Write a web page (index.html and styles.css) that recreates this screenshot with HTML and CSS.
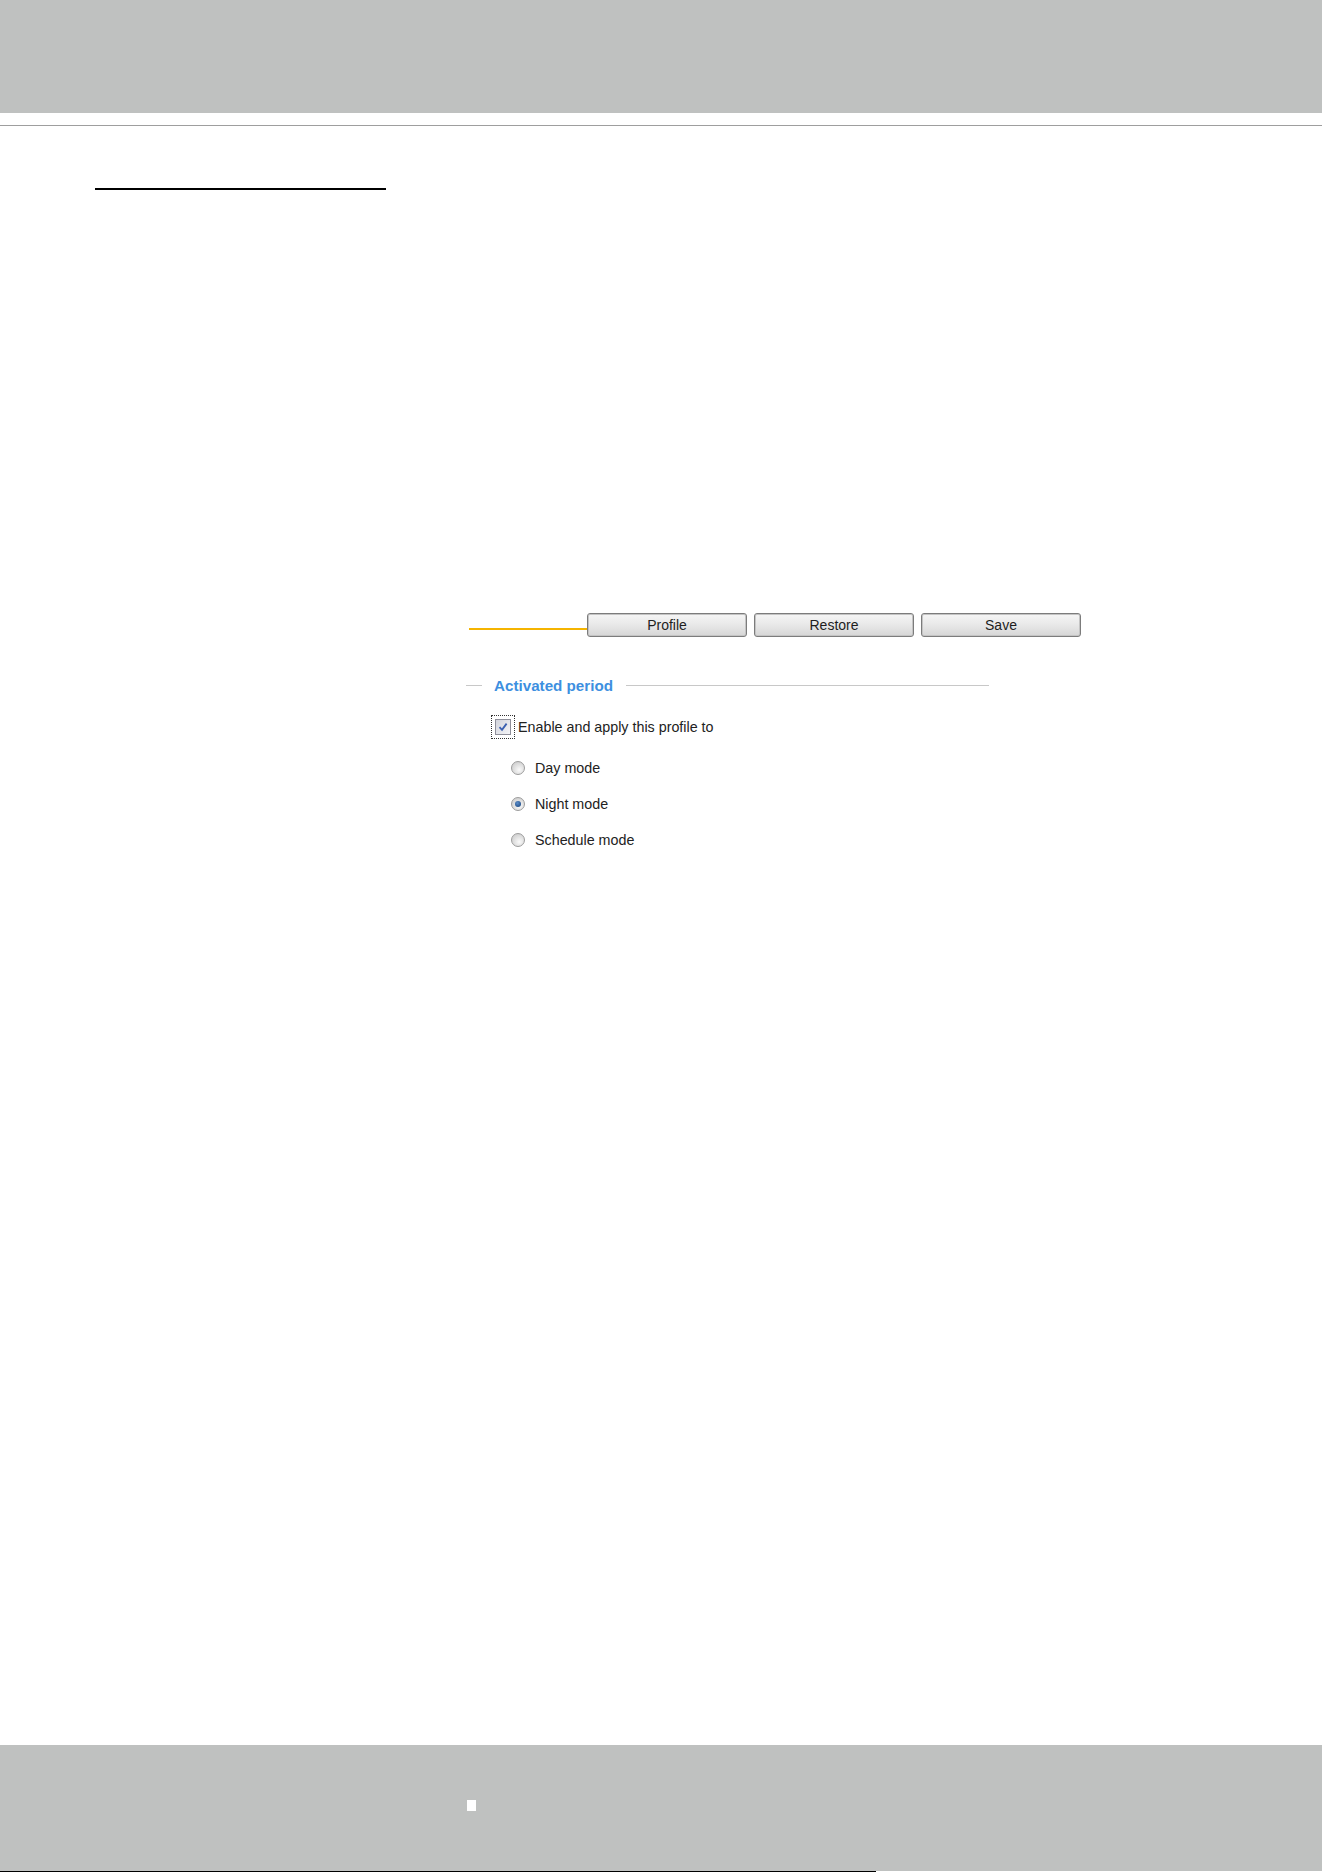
FILE: index.html
```html
<!DOCTYPE html>
<html lang="en">
<head>
  <meta charset="UTF-8" />
  <meta name="viewport" content="width=device-width, initial-scale=1" />
  <title>Image Settings - Profile</title>
  <link rel="stylesheet" href="styles.css">
</head>
<body>

  <div class="page-head"></div>
  <div class="head-rule"></div>

  <div class="sheet">
    <div class="title-rule"></div>

    <div class="panel">
      <!-- Profile / Restore / Save toolbar -->
      <div class="toolbar">
        <span class="callout"></span>
        <button class="tool-btn">Profile</button>
        <button class="tool-btn">Restore</button>
        <button class="tool-btn">Save</button>
      </div>

      <div class="group">
        <div class="group-title">
          <span class="dash"></span>
          <span class="group-name">Activated period</span>
          <span class="line"></span>
        </div>

        <div class="check-row">
          <span class="focus-ring">
            <span class="checkbox">
              <svg width="12" height="12" viewBox="0 0 12 12">
                <path d="M2.5 6.2 L5 8.8 L9.6 2.6" fill="none" stroke="#3a5fb0" stroke-width="1.8" />
              </svg>
            </span>
          </span>
          <span class="label">Enable and apply this profile to</span>
        </div>

        <div class="modes">
          <div class="mode-row"><span class="radio"></span><span class="label">Day mode</span></div>
          <div class="mode-row"><span class="radio checked"></span><span class="label">Night mode</span></div>
          <div class="mode-row"><span class="radio"></span><span class="label">Schedule mode</span></div>
        </div>
      </div>
    </div>
  </div>

  <div class="page-foot">
    <div class="foot-mark"></div>
  </div>
  <div class="foot-rule"></div>

</body>
</html>
```

FILE: styles.css
```css
body {
  margin: 0;
  font-family: "Liberation Sans", Arial, sans-serif;
  background: #fff;
  color: #222;
  min-height: 100vh;
  display: flex;
  flex-direction: column;
}
.page-head {
  height: 113px;
  margin-right: 2px;
  background: #bfc1c0;
}
.head-rule {
  height: 1px;
  margin-top: 12px;
  margin-right: 2px;
  background: #9e9e9e;
}
.title-rule {
  width: 291px;
  height: 2px;
  margin: 62px 0 0 95px;
  background: #000;
}
.panel {
  margin: 423px 0 0 466px;
  width: 620px;
}
/* toolbar */
.toolbar {
  display: flex;
  align-items: center;
  gap: 7px;
  padding-left: 3px;
  height: 24px;
}
.callout {
  width: 118px;
  height: 2px;
  margin-right: -7px;
  margin-top: 7px;
  background: #f5b400;
}
.tool-btn {
  width: 160px;
  height: 24px;
  padding: 0;
  border: 1px solid #7c7c7c;
  border-radius: 3px;
  background: linear-gradient(#f6f6f6, #e8e8e8 50%, #d6d6d6);
  box-shadow: inset 0 0 0 1px #c4c4c4;
  font-family: "Liberation Sans", Arial, sans-serif;
  font-size: 14px;
  color: #1e1e1e;
}
/* Activated period group */
.group {
  width: 523px;
  margin-top: 39px;
}
.group-title {
  display: flex;
  align-items: center;
  height: 18px;
}
.group-title .dash {
  width: 16px;
  height: 1px;
  background: #c8c8c8;
}
.group-name {
  margin: 0 13px 0 12px;
  font-size: 15.2px;
  font-weight: bold;
  color: #3d8fe0;
  white-space: nowrap;
}
.group-title .line {
  flex: 1;
  height: 1px;
  background: #c8c8c8;
}
.check-row {
  display: flex;
  align-items: center;
  height: 24px;
  margin-top: 21px;
  padding-left: 25px;
}
.focus-ring {
  width: 22px;
  height: 22px;
  border: 1px dotted #333;
  display: flex;
  align-items: center;
  justify-content: center;
  margin-right: 3px;
}
.checkbox {
  width: 16px;
  height: 16px;
  box-sizing: border-box;
  border: 1px solid #8f8f9a;
  background: linear-gradient(135deg, #d2d4dc, #f4f4f7);
  display: flex;
  align-items: center;
  justify-content: center;
}
.label {
  font-size: 14.3px;
  color: #222;
}
.modes {
  display: flex;
  flex-direction: column;
  gap: 16px;
  margin-top: 19px;
  padding-left: 45px;
}
.mode-row {
  display: flex;
  align-items: center;
  height: 20px;
}
.radio {
  width: 14px;
  height: 14px;
  box-sizing: border-box;
  border-radius: 50%;
  border: 1px solid #9c9c9c;
  background: radial-gradient(circle at 60% 65%, #fafafa, #d4d4d4 70%);
  margin-right: 10px;
  position: relative;
}
.radio.checked::after {
  content: "";
  position: absolute;
  left: 3px;
  top: 3px;
  width: 6px;
  height: 6px;
  border-radius: 50%;
  background: radial-gradient(circle at 40% 35%, #5a8cc8, #143f78);
}
/* footer band */
.page-foot {
  margin-top: auto;
  height: 126px;
  margin-right: 2px;
  background: #bfc1c0;
  overflow: hidden;
}
.foot-mark {
  width: 9px;
  height: 11px;
  margin: 55px 0 0 467px;
  background: #fff;
}
.foot-rule {
  width: 876px;
  height: 1px;
  background: #000;
}
```
